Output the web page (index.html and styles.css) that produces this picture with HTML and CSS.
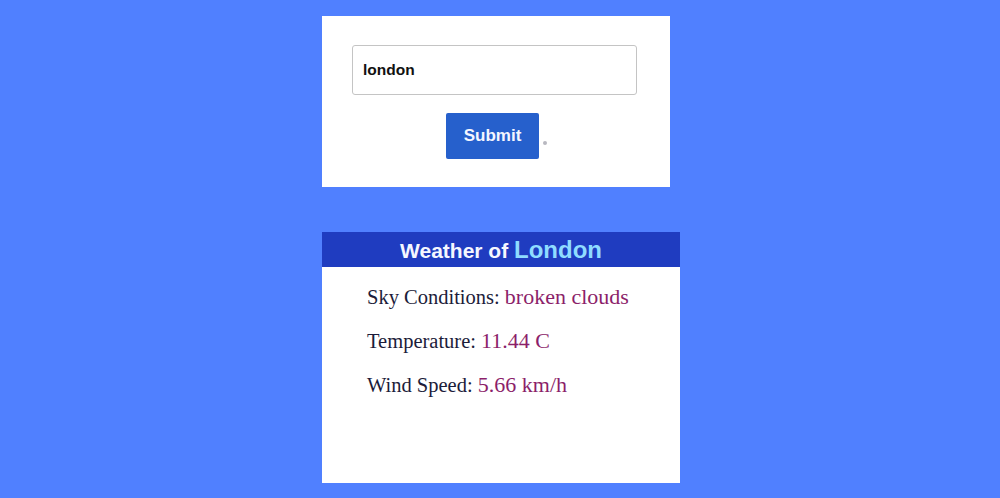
FILE: index.html
```html
<!DOCTYPE html>
<html>
<head>
<meta charset="utf-8">
<link rel="stylesheet" href="styles.css">
</head>
<body>
<div class="wrap">
  <form class="search">
    <input class="city" type="text" value="london">
    <div class="actions">
      <button class="submit" type="button">Submit</button><span class="dot"></span>
    </div>
  </form>
  <section class="weather">
    <h2 class="title">Weather of <span class="city-name">London</span></h2>
    <div class="details">
      <p class="row"><span class="label">Sky Conditions:</span> <span class="value">broken clouds</span></p>
      <p class="row"><span class="label">Temperature:</span> <span class="value">11.44 C</span></p>
      <p class="row"><span class="label">Wind Speed:</span> <span class="value">5.66 km/h</span></p>
    </div>
  </section>
</div>
</body>
</html>
```

FILE: styles.css
```css
html, body {
  margin: 0;
  padding: 0;
  background: #5080ff;
  height: 100%;
  overflow: hidden;
}
.wrap {
  width: 358px;
  margin-left: calc(50% - 178px);
  padding-top: 16px;
  display: flex;
  flex-direction: column;
  align-items: flex-start;
  gap: 45px;
}
.search {
  width: 348px;
  height: 171px;
  background: #fff;
  box-sizing: border-box;
  padding: 29px 30px 0 30px;
  display: flex;
  flex-direction: column;
  align-items: stretch;
}
.city {
  box-sizing: border-box;
  width: 285px;
  height: 50px;
  border: 1px solid #c4c4c4;
  border-radius: 3px;
  padding: 0 10px;
  font-family: "Liberation Sans", Arial, sans-serif;
  font-weight: bold;
  font-size: 15.5px;
  color: #111;
  outline: none;
}
.actions {
  margin-top: 18px;
  display: flex;
  justify-content: center;
  align-items: center;
  padding-left: 1px;
}
.submit {
  width: 93px;
  height: 46px;
  border: none;
  border-radius: 2px;
  background: #2660cc;
  color: #f4f6ff;
  font-family: "Liberation Sans", Arial, sans-serif;
  font-weight: bold;
  font-size: 17px;
  padding: 0;
}
.dot {
  width: 4px;
  height: 4px;
  border-radius: 50%;
  background: #b8b8c0;
  margin-left: 4px;
  margin-top: 14px;
}
.weather {
  width: 358px;
  height: 251px;
  background: #fff;
}
.title {
  margin: 0;
  height: 35px;
  background: #1f3cc0;
  color: #f5f7ff;
  font-family: "Liberation Sans", Arial, sans-serif;
  font-weight: bold;
  font-size: 21px;
  line-height: 35px;
  text-align: center;
}
.city-name {
  color: #8fdcff;
  font-size: 24px;
  font-weight: 600;
}
.details {
  padding: 18px 0 0 45px;
}
.row {
  margin: 0;
  height: 44px;
  font-family: "Liberation Serif", "Times New Roman", serif;
  font-size: 20.5px;
  line-height: 24px;
}
.label {
  color: #1c1c3a;
}
.value {
  color: #8c1f6a;
  font-size: 22px;
}
```
